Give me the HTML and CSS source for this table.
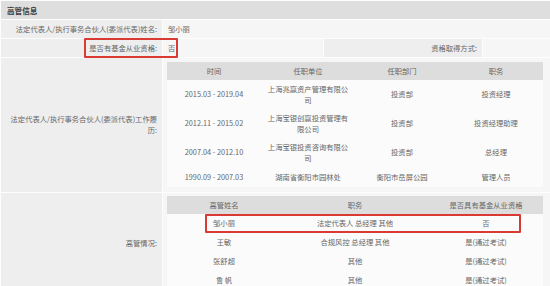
FILE: index.html
```html
<!DOCTYPE html>
<html lang="zh-CN">
<head>
<meta charset="utf-8">
<title>高管信息</title>
<link rel="stylesheet" href="styles.css">
</head>
<body>
<div class="sheet">
  <table class="info">
    <colgroup>
      <col class="c-label">
      <col class="c-val">
      <col class="c-label2">
      <col class="c-val2">
    </colgroup>
    <tr class="head-row">
      <td colspan="4" class="section">高管信息</td>
    </tr>
    <tr>
      <td class="label">法定代表人/执行事务合伙人(委派代表)姓名:</td>
      <td colspan="3" class="value">邹小丽</td>
    </tr>
    <tr>
      <td class="label">是否有基金从业资格:</td>
      <td class="value">否</td>
      <td class="label">资格取得方式:</td>
      <td class="value"></td>
    </tr>
    <tr>
      <td class="label wrap">法定代表人/执行事务合伙人(委派代表)工作履历:</td>
      <td colspan="3" class="value nest">
        <table class="sub sub-work">
          <colgroup>
            <col class="w94"><col class="w94"><col class="w94"><col class="w94">
          </colgroup>
          <tr class="sub-head"><td>时间</td><td>任职单位</td><td>任职部门</td><td>职务</td></tr>
          <tr><td>2015.03 - 2019.04</td><td>上海兆赢资产管理有限公司</td><td>投资部</td><td>投资经理</td></tr>
          <tr><td>2012.11 - 2015.02</td><td>上海宝银创赢投资管理有限公司</td><td>投资部</td><td>投资经理助理</td></tr>
          <tr><td>2007.04 - 2012.10</td><td>上海宝银投资咨询有限公司</td><td>投资部</td><td>总经理</td></tr>
          <tr class="last"><td>1990.09 - 2007.03</td><td>湖南省衡阳市园林处</td><td>衡阳市岳屏公园</td><td>管理人员</td></tr>
        </table>
      </td>
    </tr>
    <tr>
      <td class="label">高管情况:</td>
      <td colspan="3" class="value nest nest2">
        <table class="sub sub-mgr">
          <colgroup>
            <col class="w114"><col class="w148"><col class="w114">
          </colgroup>
          <tr class="sub-head"><td>高管姓名</td><td>职务</td><td>是否具有基金从业资格</td></tr>
          <tr><td>邹小丽</td><td>法定代表人 总经理 其他</td><td>否</td></tr>
          <tr><td>王敏</td><td>合规风控 总经理 其他</td><td>是(通过考试)</td></tr>
          <tr><td>张舒超</td><td>其他</td><td>是(通过考试)</td></tr>
          <tr><td>鲁 帆</td><td>其他</td><td>是(通过考试)</td></tr>
        </table>
      </td>
    </tr>
  </table>
  <div class="mark mark-1"></div>
  <div class="mark mark-2"></div>
</div>
</body>
</html>
```

FILE: styles.css
```css
html, body {
  margin: 0;
  padding: 0;
  background: #f6f6f6;
}
body {
  font-family: "Noto Sans CJK SC", "Noto Sans", sans-serif;
  font-size: 7.3px;
  color: #666;
  width: 550px;
  height: 286px;
  overflow: hidden;
}
.sheet {
  position: relative;
  width: 550px;
}
.info {
  width: 550px;
  border-collapse: collapse;
  table-layout: fixed;
}
.c-label { width: 162px; }
.c-val { width: 161px; }
.c-label2 { width: 159px; }
.c-val2 { width: 68px; }
.info > tbody > tr > td,
.info > tr > td {
  border: 1px solid #fdfdfd;
  line-height: 11px;
  padding: 3.5px 5px;
  vertical-align: middle;
}
.section {
  background: #dedede;
  color: #3a3a3a;
  font-weight: bold;
  font-size: 7.6px;
  padding-left: 6px !important;
  height: 11px;
}
.label {
  background: #eeeeee;
  text-align: right;
  white-space: nowrap;
  color: #666;
}
.label.wrap {
  white-space: normal;
}
.value {
  background: #f6f6f6;
  text-align: left;
  color: #666;
}
.info td.nest {
  padding: 4px 7px 5px 4px;
}
.info td.nest2 {
  padding: 3px 7px 4px 4px;
}
.sub {
  border-collapse: collapse;
  table-layout: fixed;
  width: 376px;
}
.w94 { width: 94px; }
.w114 { width: 114px; }
.w148 { width: 148px; }
.sub td {
  text-align: center;
  line-height: 11px;
  padding: 3.5px 5px;
  background: #fbfbfb;
  color: #666;
  border: 0;
}
.sub-work .last td {
  padding: 4.5px 5px;
}
.sub .sub-head td {
  background: #dddddd;
  color: #666;
}
.sub-mgr td {
  padding: 4px 3px;
}
.sub-mgr .sub-head td {
  padding: 3.5px 3px;
}
.mark {
  position: absolute;
  box-sizing: border-box;
  border: 2px solid #d93a34;
  border-radius: 1px;
}
.mark-1 {
  left: 84px;
  top: 38px;
  width: 94px;
  height: 20px;
}
.mark-2 {
  left: 205px;
  top: 214px;
  width: 316px;
  height: 19px;
}
```
